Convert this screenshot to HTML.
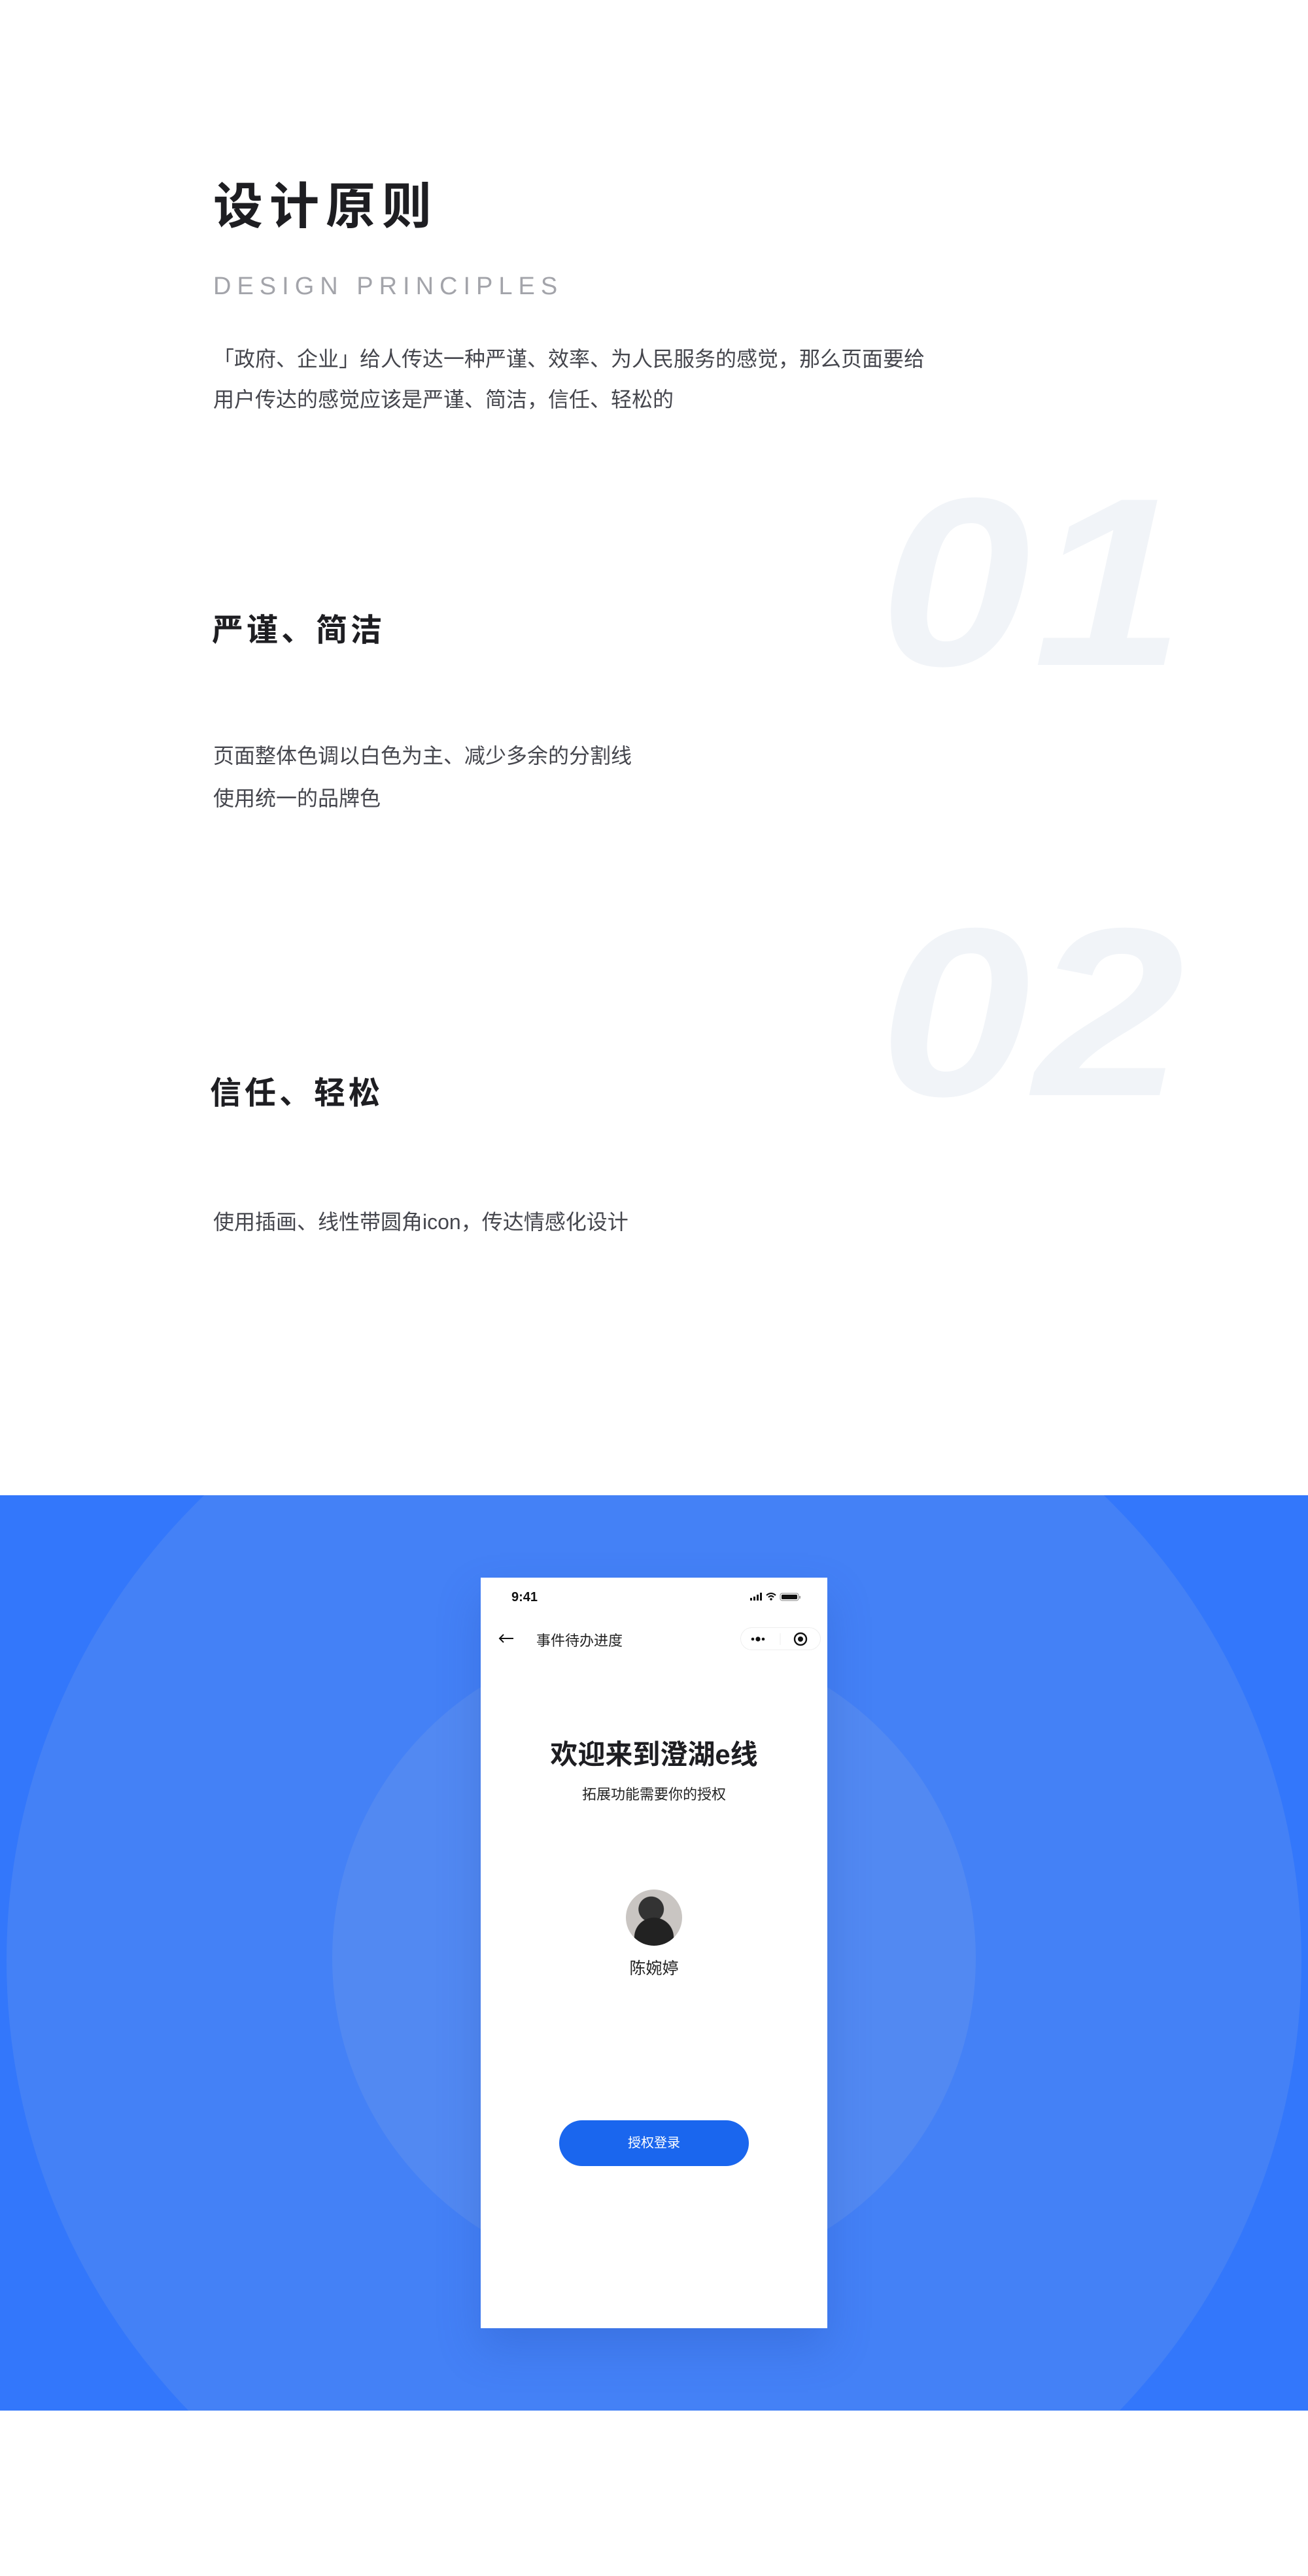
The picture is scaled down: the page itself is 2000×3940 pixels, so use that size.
<!DOCTYPE html>
<html><head><meta charset="utf-8"><style>
*{margin:0;padding:0;box-sizing:border-box}
body{width:2000px;height:3940px;background:#fff;position:relative;overflow:hidden;font-family:"Liberation Sans","Noto Sans CJK SC",sans-serif}
.a{position:absolute;white-space:nowrap}
.p{font-size:32px;color:#45464d;line-height:40px}
.h{font-size:48px;font-weight:bold;color:#1e1e22;letter-spacing:5px;line-height:56px}
.num{font-size:367px;font-weight:bold;font-style:italic;color:#f1f4f8;line-height:1;letter-spacing:4px;transform:scaleX(1.13);transform-origin:left top}
</style></head><body>
<div class="a" style="left:326px;top:274px;font-size:76px;font-weight:bold;color:#1e1e22;letter-spacing:10px;line-height:86px">设计原则</div>
<div class="a" style="left:326px;top:418px;font-size:38px;color:#a3a4aa;letter-spacing:9px;line-height:40px">DESIGN PRINCIPLES</div>
<div class="a p" style="left:326px;top:529px">「政府、企业」给人传达一种严谨、效率、为人民服务的感觉，那么页面要给</div>
<div class="a p" style="left:326px;top:591px">用户传达的感觉应该是严谨、简洁，信任、轻松的</div>
<div class="a num" style="left:1345px;top:707px">01</div>
<div class="a h" style="left:324px;top:937px">严谨、简洁</div>
<div class="a p" style="left:326px;top:1136px">页面整体色调以白色为主、减少多余的分割线</div>
<div class="a p" style="left:326px;top:1201px">使用统一的品牌色</div>
<div class="a num" style="left:1345px;top:1365px">02</div>
<div class="a h" style="left:321px;top:1645px">信任、轻松</div>
<div class="a p" style="left:326px;top:1849px">使用插画、线性带圆角icon，传达情感化设计</div>

<div class="a" style="left:0;top:2287px;width:2000px;height:1400px;background:#3377fb;overflow:hidden">
  <div class="a" style="left:10px;top:-278px;width:1980px;height:1980px;border-radius:50%;background:#4481f6"></div>
  <div class="a" style="left:508px;top:216px;width:984px;height:984px;border-radius:50%;background:#5289f2"></div>
  <div class="a" style="left:735px;top:126px;width:530px;height:1148px;background:#fff;box-shadow:0 30px 60px rgba(30,70,170,0.25)">
    <div class="a" style="left:47px;top:19px;font-size:20px;font-weight:bold;color:#111">9:41</div>
    <svg class="a" style="left:412px;top:21px" width="92" height="16" viewBox="0 0 92 16">
      <rect x="0" y="10" width="3" height="4" fill="#111"/><rect x="5" y="8" width="3" height="6" fill="#111"/><rect x="10" y="5" width="3" height="9" fill="#111"/><rect x="15" y="2" width="3" height="12" fill="#111"/>
      <path d="M25 6 Q32 0 39 6" stroke="#111" stroke-width="2.2" fill="none"/><path d="M28 9 Q32 5 36 9" stroke="#111" stroke-width="2.2" fill="none"/><circle cx="32" cy="12" r="1.8" fill="#111"/>
      <rect x="46" y="3" width="28" height="11" rx="3" fill="none" stroke="#999" stroke-width="1.2"/><rect x="48" y="5" width="24" height="7" rx="1.5" fill="#111"/><rect x="75" y="7" width="2" height="4" fill="#999"/>
    </svg>
    <svg class="a" style="left:26px;top:85px" width="26" height="16" viewBox="0 0 26 16"><path d="M24 8H3M9 2L3 8l6 6" stroke="#111" stroke-width="2" fill="none"/></svg>
    <div class="a" style="left:85px;top:79px;font-size:22px;color:#222">事件待办进度</div>
    <div class="a" style="left:397px;top:76px;width:123px;height:35px;border:1px solid #eee;border-radius:18px"></div>
    <svg class="a" style="left:397px;top:76px" width="123" height="35" viewBox="0 0 123 35"><circle cx="19" cy="18" r="2.3" fill="#111"/><circle cx="27" cy="18" r="3.6" fill="#111"/><circle cx="35" cy="18" r="2.3" fill="#111"/><line x1="61" y1="9" x2="61" y2="27" stroke="#eee"/><circle cx="92" cy="18" r="9" fill="none" stroke="#111" stroke-width="2.4"/><circle cx="92" cy="18" r="4" fill="#111"/></svg>
    <div class="a" style="left:0;top:244px;width:530px;text-align:center;font-size:42px;font-weight:bold;color:#1e1e22;line-height:54px">欢迎来到澄湖e线</div>
    <div class="a" style="left:0;top:316px;width:530px;text-align:center;font-size:22px;color:#222;line-height:32px">拓展功能需要你的授权</div>
    <div class="a" style="left:222px;top:477px;width:86px;height:86px;border-radius:50%;background:radial-gradient(circle at 50% 85%,#222 0 35%,transparent 36%),radial-gradient(circle at 45% 35%,#333 0 26%,transparent 27%),#c9c5c2"></div>
    <div class="a" style="left:0;top:580px;width:530px;text-align:center;font-size:25px;color:#222;line-height:36px">陈婉婷</div>
    <div class="a" style="left:120px;top:830px;width:290px;height:70px;border-radius:35px;background:#1a66ee;color:#fff;font-size:20px;text-align:center;line-height:70px">授权登录</div>
  </div>
</div>
</body></html>
